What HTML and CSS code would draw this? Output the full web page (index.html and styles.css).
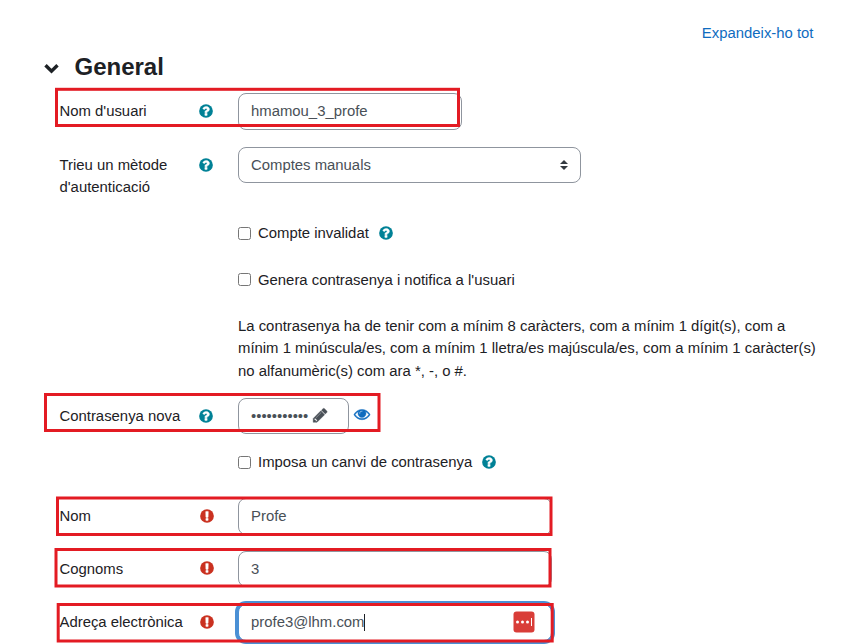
FILE: index.html
```html
<!DOCTYPE html>
<html lang="ca">
<head>
<meta charset="utf-8">
<title>General</title>
<link rel="stylesheet" href="styles.css">
</head>
<body>
<svg class="defs" aria-hidden="true">
  <symbol id="help" viewBox="0 0 1792 1792"><circle cx="896" cy="896" r="768"/><path class="glyph" d="M1024 1376v-192q0-14-9-23t-23-9h-192q-14 0-23 9t-9 23v192q0 14 9 23t23 9h192q14 0 23-9t9-23zm256-672q0-88-55.500-163t-138.500-116-170-41q-243 0-371 213-15 24 8 42l132 100q7 6 19 6 16 0 25-12 53-68 86-92 34-24 86-24 48 0 85.500 26t37.500 59q0 38-20 61t-68 45q-63 28-115.500 86.500t-52.500 125.500v36q0 14 9 23t23 9h192q14 0 23-9t9-23q0-19 21.500-49.500t54.500-49.500q32-18 49-28.500t46-35 44.500-48 28-60.500 12.500-81z"/></symbol>
  <symbol id="required" viewBox="0 0 1792 1792"><circle cx="896" cy="896" r="768"/><path class="glyph" d="M1024 1375v-190q0-14-9-23.500t-22-9.500h-192q-13 0-23 10t-10 23v190q0 13 10 23t23 10h192q13 0 22-9.500t9-23.500zm-2-344l18-621q0-12-10-18-10-8-24-8h-220q-14 0-24 8-10 6-10 18l17 621q0 10 10 17.500t24 7.500h185q14 0 23.500-7.500t10.500-17.500z"/></symbol>
</svg>
<main class="form">
  <div class="expand"><a>Expandeix-ho tot</a></div>
  <header class="heading">
    <svg class="chevron" viewBox="0 0 16 11"><path d="M1.500 2.300 7.500 8.200 13.500 2.300"/></svg>
    <h3>General</h3>
  </header>

  <div class="row row-user">
    <label>Nom d'usuari</label>
    <svg class="icon help"><use href="#help"/></svg>
    <div class="field field-user">hmamou_3_profe</div>
  </div>
  <div class="row row-auth">
    <label>Trieu un mètode d'autenticació</label>
    <svg class="icon help"><use href="#help"/></svg>
    <div class="field select"><span>Comptes manuals</span>
      <svg class="arrows" viewBox="0 0 8 10"><path d="M4 0 8 4H0zM4 10 0 6h8z"/></svg>
    </div>
  </div>
  <div class="check check-disabled"><input type="checkbox"><span>Compte invalidat</span><svg class="icon help"><use href="#help"/></svg></div>
  <div class="check check-generate"><input type="checkbox"><span>Genera contrasenya i notifica a l'usuari</span></div>
  <p class="policy">La contrasenya ha de tenir com a mínim 8 caràcters, com a mínim 1 dígit(s), com a mínim 1 minúscula/es, com a mínim 1 lletra/es majúscula/es, com a mínim 1 caràcter(s) no alfanumèric(s) com ara *, -, o #.</p>
  <div class="row row-password">
    <label>Contrasenya nova</label>
    <svg class="icon help"><use href="#help"/></svg>
    <div class="password">
      <div class="field field-password"><span>•••••••••••</span>
        <svg class="pencil" viewBox="0 0 1792 1792"><path d="M491 1536l91-91-235-235-91 91v107h128v128h107zm523-928q0-22-22-22-10 0-17 7l-542 542q-7 7-7 17 0 22 22 22 10 0 17-7l542-542q7-7 7-17zm-54-192l416 416-832 832h-416v-416zm683 96q0 53-37 90l-166 166-416-416 166-165q36-38 90-38 53 0 91 38l235 234q37 39 37 91z"/></svg>
      </div>
      <svg class="eye" viewBox="0 0 1792 1792"><path d="M1664 960q-152-236-381-353 61 104 61 225 0 185-131.500 316.500t-316.500 131.500-316.500-131.500-131.500-316.500q0-121 61-225-229 117-381 353 133 205 333.500 326.500t434.500 121.500 434.500-121.500 333.500-326.500zm-720-384q0-20-14-34t-34-14q-125 0-214.500 89.500t-89.500 214.500q0 20 14 34t34 14 34-14 14-34q0-86 61-147t147-61q20 0 34-14t14-34zm848 384q0 34-20 69-140 230-376.500 368.500t-499.500 138.500-499.500-139-376.500-368q-20-35-20-69t20-69q140-229 376.500-368t499.500-139 499.500 139 376.500 368q20 35 20 69z"/></svg>
    </div>
  </div>
  <div class="check check-force"><input type="checkbox"><span>Imposa un canvi de contrasenya</span><svg class="icon help"><use href="#help"/></svg></div>
  <div class="row row-name">
    <label>Nom</label>
    <svg class="icon required"><use href="#required"/></svg>
    <div class="field">Profe</div>
  </div>
  <div class="row row-surname">
    <label>Cognoms</label>
    <svg class="icon required"><use href="#required"/></svg>
    <div class="field">3</div>
  </div>
  <div class="row row-email">
    <label>Adreça electrònica</label>
    <svg class="icon required"><use href="#required"/></svg>
    <div class="field focused"><span>profe3@lhm.com</span><i class="caret"></i>
      <svg class="manager" viewBox="0 0 22 22"><rect x=".500" y=".500" width="21" height="21" rx="3"/><circle cx="4.500" cy="11" r="1.500"/><circle cx="9.500" cy="11" r="1.500"/><circle cx="14.500" cy="11" r="1.500"/><path d="M18.500 7v8"/></svg>
    </div>
  </div>
</main>
<svg class="marks" viewBox="0 0 842 644">
  <rect x="56.500" y="89.300" width="402" height="36.200"/>
  <rect x="45.500" y="394.500" width="333.500" height="36"/>
  <rect x="57.500" y="498" width="493.500" height="36.500"/>
  <rect x="56" y="549.500" width="494" height="36.500"/>
  <rect x="58.200" y="604.500" width="494" height="36.500"/>
</svg>
</body>
</html>
```
FILE: styles.css
```css
* { box-sizing: border-box; }
body {
  margin: 0;
  height: 644px;
  overflow: hidden;
  background: #fff;
  color: #1d2125;
  font: 14.880px/22.320px "Liberation Sans", Arial, sans-serif;
}
.defs { display: block; width: 0; height: 0; }
.form {
  display: grid;
  grid-template-rows: 50px 43px 54px 68px 47px 46px 90px 46px 54px 52.500px 53.500px 40px;
  padding-left: 59.500px;
}
.expand { padding: 22px 28.500px 0 0; text-align: right; color: #0f6cbf; }
.heading { display: flex; align-items: flex-start; gap: 15px; margin-left: -16px; }
.heading h3 { margin: 2px 0 0; font-size: 24px; line-height: 29px; }
.chevron { width: 16px; height: 11px; margin-top: 13px; fill: none; stroke: #1d2125; stroke-width: 3.400; }
.row {
  display: grid;
  grid-template-columns: 138.500px 40px 1fr;
  align-items: start;
}
.row label { padding: 7px 14px 0 0; }
.icon { display: block; width: 16px; height: 16px; flex: none; }
.row .icon { margin-top: 10px; }
.row .required { margin-left: 1px; margin-top: 9.500px; }
.help { fill: #008196; }
.required { fill: #ca3120; }
.glyph { fill: #fff; stroke: #fff; stroke-width: 50; }
.field {
  display: flex;
  align-items: center;
  width: 314px;
  height: 36.500px;
  padding: 0 12px;
  border: 1px solid #8f959e;
  border-radius: 8px;
  background: #fff;
  color: #495057;
}
.field-user { width: 224px; }
.select { width: 343px; height: 36px; justify-content: space-between; }
.arrows { width: 8px; height: 10px; fill: #343a40; }
.check { display: flex; align-items: center; height: 36px; padding-left: 178.500px; }
.check input { width: 13px; height: 13px; margin: 0 7px 0 0; }
.check-generate { height: 36.500px; }
.check-generate input { margin-bottom: 1px; }
.check .icon { margin-left: 9px; }
.policy { width: 590px; margin: 7px 0 0 178.500px; }
.password { display: flex; align-items: flex-start; }
.field-password { width: 111px; gap: 4px; height: 35.500px; }
.pencil { width: 16.500px; height: 16.500px; flex: none; margin-bottom: 1px; fill: #495057; stroke: #495057; stroke-width: 40; }
.eye { width: 16px; height: 16px; margin: 8px 0 0 4.500px; fill: #0f6cbf; stroke: #0f6cbf; stroke-width: 50; overflow: visible; }
.focused { box-shadow: 0 0 0 3px #4a90d5; border-color: #4a90d5; }
.caret { width: 1px; height: 17px; background: #1d2125; }
.manager { width: 22px; height: 22px; margin-left: auto; margin-right: 4px; fill: #fff; stroke: none; }
.manager rect { fill: #d93d38; }
.manager path { stroke: #fff; stroke-width: 1; }
.marks { position: absolute; left: 0; top: 0; width: 842px; height: 644px; fill: none; stroke: #e31b23; stroke-width: 3; }
```
